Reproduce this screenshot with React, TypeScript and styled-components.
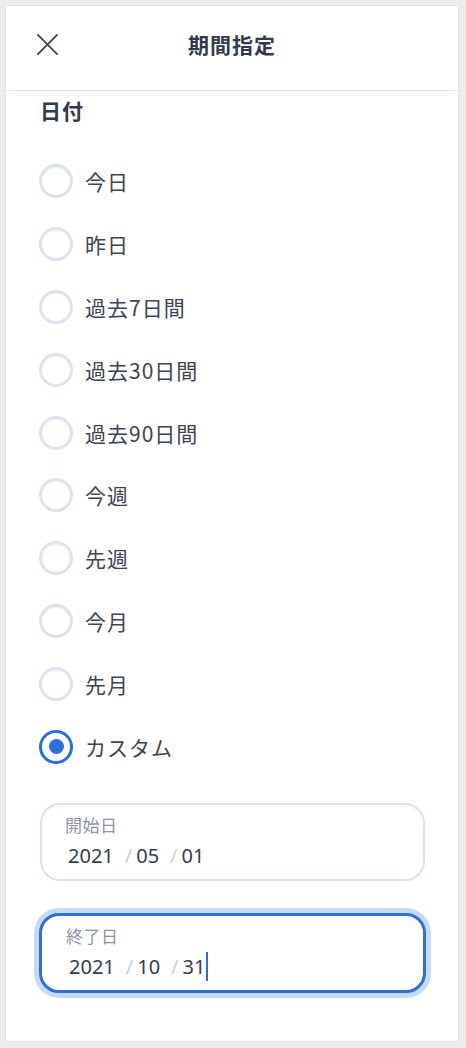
import React, { useState } from "react";
import styled, { createGlobalStyle } from "styled-components";

const Global = createGlobalStyle`
  html, body { margin: 0; padding: 0; background: #ececec; }
  body { font-family: "Noto Sans", "Noto Sans CJK JP", sans-serif; }
  * { box-sizing: border-box; }
`;

const Panel = styled.div`
  margin: 5px 7px 6px 5px;
  height: 1037px;
  background: #ffffff;
  border: 1px solid #e3e3e3;
  display: flex;
  flex-direction: column;
`;

const Header = styled.header`
  height: 85px;
  flex: none;
  display: grid;
  grid-template-columns: 56px 1fr 56px;
  align-items: center;
  padding: 0 29px 8px;
  border-bottom: 1px solid #d6e0ee;
`;

const CloseButton = styled.button`
  width: 24px;
  height: 24px;
  padding: 0;
  border: none;
  background: none;
  display: flex;
  align-items: center;
  justify-content: center;
  color: #3a4452;
  cursor: pointer;
`;

const Title = styled.h1`
  margin: 0;
  text-align: center;
  font-size: 21px;
  font-weight: 700;
  color: #2f3a4a;
  letter-spacing: 1px;
  font-family: "Noto Sans CJK JP", sans-serif;
`;

const Body = styled.div`
  padding: 5px 33px 0 33px;
  display: flex;
  flex-direction: column;
`;

const SectionTitle = styled.h2`
  margin: 0 0 0 1px;
  font-size: 21px;
  line-height: 28px;
  font-weight: 700;
  color: #2f3a4a;
  letter-spacing: 1px;
  font-family: "Noto Sans CJK JP", sans-serif;
`;

const RadioList = styled.div`
  margin-top: 26px;
  display: flex;
  flex-direction: column;
`;

const Row = styled.label`
  height: 62.8px;
  display: flex;
  align-items: center;
  gap: 12px;
  cursor: pointer;
`;

const Circle = styled.span<{ $checked: boolean }>`
  width: 34px;
  height: 34px;
  flex: none;
  border-radius: 50%;
  border: 3px solid ${(p) => (p.$checked ? "#2c6fd6" : "#dae3ee")};
  background: #fff;
  box-shadow: ${(p) => (p.$checked ? "none" : "inset 0 1px 2px rgba(120,140,170,0.12)")};
  display: flex;
  align-items: center;
  justify-content: center;

  &::after {
    content: "";
    width: 15px;
    height: 15px;
    border-radius: 50%;
    background: #2c6fd6;
    display: ${(p) => (p.$checked ? "block" : "none")};
  }
`;

const RowText = styled.span`
  font-size: 21px;
  letter-spacing: 1px;
  color: #3b4554;
  font-family: "Noto Sans CJK JP", "Noto Sans", sans-serif;
`;

const Fields = styled.div`
  margin-top: 25px;
  padding: 0 0 0 1px;
  display: flex;
  flex-direction: column;
  gap: 33px;
`;

const Field = styled.div<{ $focused: boolean }>`
  height: ${(p) => (p.$focused ? 80 : 78)}px;
  margin: ${(p) => (p.$focused ? "-1px -1px 0" : "0")};
  border-radius: 20px;
  border: ${(p) => (p.$focused ? "3px solid #2d6fd6" : "2px solid #d9e2ed")};
  box-shadow: ${(p) => (p.$focused ? "0 0 0 5px #c6daf3" : "inset 0 2px 3px rgba(140,160,190,0.08)")};
  padding: ${(p) => (p.$focused ? "9px 24px" : "9px 23px")};
  display: flex;
  flex-direction: column;
  gap: 6px;
  background: #fff;
`;

const FieldLabel = styled.span`
  font-size: 17px;
  line-height: 22px;
  letter-spacing: 0.5px;
  color: #8d96a4;
  font-family: "Noto Sans CJK JP", "Noto Sans", sans-serif;
`;

const FieldValue = styled.div`
  display: flex;
  align-items: center;
  height: 28px;
  font-size: 20px;
  color: #333d4b;
  padding-left: 3px;
`;

const Sep = styled.span`
  color: #c9d0da;
  margin: 0 4px 0 11px;
`;

const Caret = styled.span`
  display: inline-block;
  width: 2px;
  height: 29px;
  margin-left: 1px;
  background: #2d6fd6;
`;

const options = ["今日", "昨日", "過去7日間", "過去30日間", "過去90日間", "今週", "先週", "今月", "先月", "カスタム"];

function DateValue({ y, m, d, caret }: { y: string; m: string; d: string; caret?: boolean }) {
  return (
    <FieldValue>
      <span>{y}</span>
      <Sep>/</Sep>
      <span>{m}</span>
      <Sep>/</Sep>
      <span>{d}</span>
      {caret && <Caret />}
    </FieldValue>
  );
}

export default function App() {
  const [selected, setSelected] = useState("カスタム");
  return (
    <>
      <Global />
      <Panel>
        <Header>
          <CloseButton aria-label="閉じる">
            <svg width="23" height="23" viewBox="0 0 24 24" fill="none" stroke="currentColor" strokeWidth="1.9" strokeLinecap="round">
              <path d="M2 2 L22 22 M22 2 L2 22" />
            </svg>
          </CloseButton>
          <Title>期間指定</Title>
          <span />
        </Header>
        <Body>
          <SectionTitle>日付</SectionTitle>
          <RadioList>
            {options.map((o) => (
              <Row key={o} onClick={() => setSelected(o)}>
                <Circle $checked={selected === o} />
                <RowText>{o}</RowText>
              </Row>
            ))}
          </RadioList>
          <Fields>
            <Field $focused={false}>
              <FieldLabel>開始日</FieldLabel>
              <DateValue y="2021" m="05" d="01" />
            </Field>
            <Field $focused={true}>
              <FieldLabel>終了日</FieldLabel>
              <DateValue y="2021" m="10" d="31" caret />
            </Field>
          </Fields>
        </Body>
      </Panel>
    </>
  );
}
